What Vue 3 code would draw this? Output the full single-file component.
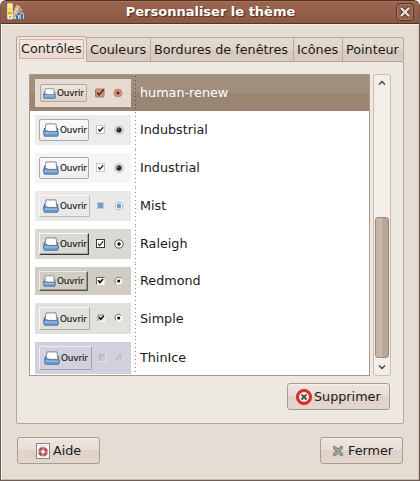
<script setup>
const tabs = [
  { label: 'Contrôles', cls: 't1 active' },
  { label: 'Couleurs', cls: 't2' },
  { label: 'Bordures de fenêtres', cls: 't3' },
  { label: 'Icônes', cls: 't4' },
  { label: 'Pointeur', cls: 't5' },
]
const themes = [
  { name: 'human-renew', cls: 'human', check: 'human', radio: 'human' },
  { name: 'Indubstrial', cls: 'indub', check: 'soft', radio: 'big' },
  { name: 'Industrial', cls: 'indus', check: 'soft', radio: 'big' },
  { name: 'Mist', cls: 'mist', check: 'mist', radio: 'mist' },
  { name: 'Raleigh', cls: 'raleigh', check: 'box', radio: 'box' },
  { name: 'Redmond', cls: 'redmond', check: 'inset', radio: 'inset' },
  { name: 'Simple', cls: 'simple', check: 'flat', radio: 'inset' },
  { name: 'ThinIce', cls: 'thin', check: 'thin', radio: 'thin' },
]
</script>

<template>
  <div class="window">
    <header class="titlebar">
      <svg class="app-icon" width="18" height="18" viewBox="0 0 18 18">
        <path d="M5 14 13 4l3 3-9 9z" fill="#a4a0a0" />
        <path d="M5 13 9.500 1.500l4 2L6 15z" fill="#d7b58d" />
        <path d="m8 5 3 2M7 8l3 2" stroke="#faf0d8" stroke-width="1" />
        <path d="m6 15 10-6 1 3v4H6z" fill="#c9cdd5" />
        <path d="M11 10h2v2h-2z" fill="#725b6d" />
        <path d="M9 12.500h2V16H9zM14 11h2v5h-2z" fill="#376fae" />
        <path d="M12 12h1.500v4H12z" fill="#86aed8" />
        <rect x=".5" y=".5" width="5" height="15.500" rx="1" fill="#f5f4e8" stroke="#d8d4cc" />
        <path d="M1 1h4v3H1z" fill="#f5ee9b" />
        <path d="M1 4.500h4v3H1z" fill="#f8df27" />
        <path d="M1 8.500h4v3H1z" fill="#d7bd12" />
        <circle cx="3" cy="13.800" r="1" fill="#8b8b86" />
      </svg>
      <h1>Personnaliser le thème</h1>
      <button class="close">
        <svg width="16" height="16" viewBox="0 0 16 16">
          <path d="m4 4 8 8M12 4l-8 8" stroke="#593329" stroke-width="4" />
          <path d="m4 4 8 8M12 4l-8 8" stroke="#eee2dc" stroke-width="2.400" />
        </svg>
      </button>
    </header>

    <main class="body">
      <nav class="tabs">
        <div v-for="t in tabs" :key="t.label" class="tab" :class="t.cls"><span>{{ t.label }}</span></div>
      </nav>

      <section class="panel">
        <div class="list-area">
          <ul class="list">
            <li v-for="t in themes" :key="t.name" class="row" :class="'r-' + t.cls">
              <div class="thumb" :class="t.cls">
                <div class="demo">
                  <svg class="folder" viewBox="0 0 16 14" preserveAspectRatio="none">
                    <path d="M3 .9h10l1 7.500H2z" fill="#fcfcfb" stroke="#85898d" />
                    <path d="M1.400 5v4M14.600 5v4" stroke="#55799f" stroke-width="1.200" />
                    <path d="M.7 7.800h3.600l1 1.200H15.300v2.200l-.7 2H1.400l-.7-2z" fill="#6f9fd0" stroke="#3f6da3" stroke-width=".9" />
                    <path d="M1.500 10h13" stroke="#a5c8e9" stroke-width="1.200" />
                  </svg>
                  <span>Ouvrir</span>
                </div>
                <svg class="check" width="12" height="12" viewBox="0 0 12 12">
                  <template v-if="t.check === 'human'">
                    <rect x="1.500" y="2" width="8.500" height="8" rx="1" fill="#d98f78" stroke="#a87563" />
                    <path d="m3 5.500 2 2.300 5-5.600" fill="none" stroke="#40302b" stroke-width="1.500" />
                  </template>
                  <template v-else-if="t.check === 'soft'">
                    <rect x="1.500" y="1.500" width="8" height="8" fill="#fff" stroke="#c6c6c6" />
                    <path d="m3.300 5.200 1.500 2 3.400-3.900" fill="none" stroke="#222" stroke-width="1.300" />
                  </template>
                  <template v-else-if="t.check === 'mist'">
                    <rect x="2.500" y="2.500" width="6" height="6" fill="#6c9fd5" stroke="#c5c9ce" />
                  </template>
                  <template v-else-if="t.check === 'box'">
                    <rect x="1.500" y="1.500" width="8" height="8" fill="#fff" stroke="#3a3a38" />
                    <path d="m3 5.500 1.600 2.200 3.700-4.500" fill="none" stroke="#222" stroke-width="1.100" />
                  </template>
                  <template v-else-if="t.check === 'inset'">
                    <rect x="1" y="2" width="8.500" height="8" fill="#fff" />
                    <path d="M1.500 9.500v-7h8" fill="none" stroke="#666159" />
                    <path d="m3.200 5.300 1.600 2.200L8 4" fill="none" stroke="#111" stroke-width="1.800" />
                  </template>
                  <template v-else-if="t.check === 'flat'">
                    <rect x="1.500" y="2.500" width="7" height="7" fill="#e9ebe6" />
                    <path d="M2 9V3h6" fill="none" stroke="#6e706c" stroke-width=".9" />
                    <path d="M8.500 3v6.500H2" fill="none" stroke="#fafaf7" />
                    <path d="m3 5 1.700 2.300L8 3.700" fill="none" stroke="#111" stroke-width="1.600" />
                  </template>
                  <template v-else>
                    <rect x="2" y="2.500" width="6.500" height="7" fill="#c8c8d4" />
                    <path d="M2.500 9V3H8" fill="none" stroke="#adadb9" />
                    <path d="M2 9.500h7v-7" fill="none" stroke="#e8e8f0" />
                  </template>
                </svg>
                <svg class="radio" width="12" height="12" viewBox="0 0 12 12">
                  <template v-if="t.radio === 'human'">
                    <circle cx="6" cy="6" r="4" fill="#d98f78" stroke="#c08a76" />
                    <circle cx="6" cy="6" r="1.500" fill="#40302b" />
                  </template>
                  <template v-else-if="t.radio === 'big'">
                    <circle cx="6" cy="6" r="4.100" fill="#fff" stroke="#a8a8a8" stroke-width=".9" />
                    <circle cx="6" cy="6" r="2.700" fill="#252525" />
                    <circle cx="5.200" cy="5" r=".8" fill="#999" />
                  </template>
                  <template v-else-if="t.radio === 'mist'">
                    <circle cx="6" cy="6" r="4" fill="#fff" stroke="#b1bac3" />
                    <circle cx="6" cy="6" r="2.400" fill="#6c9fd5" />
                  </template>
                  <template v-else-if="t.radio === 'box'">
                    <circle cx="6" cy="6" r="4.100" fill="#fff" stroke="#484845" stroke-width=".9" />
                    <circle cx="6" cy="6" r="1.800" fill="#111" />
                  </template>
                  <template v-else-if="t.radio === 'inset'">
                    <circle cx="5.700" cy="6" r="3.600" fill="#fff" />
                    <path d="M3 8.600A3.700 3.700 0 0 1 8.300 3.400" fill="none" stroke="#77736c" />
                    <circle cx="5.700" cy="6" r="1.600" fill="#111" />
                  </template>
                  <template v-else>
                    <circle cx="6" cy="6" r="3.700" fill="#c8c8d4" stroke="#e6e6ee" />
                    <path d="M3.400 8.600A3.700 3.700 0 0 1 8.600 3.400" fill="none" stroke="#b0b0bc" />
                  </template>
                </svg>
              </div>
              <span class="name">{{ t.name }}</span>
            </li>
          </ul>
          <div class="scrollbar">
            <svg class="arrow up" width="8" height="6" viewBox="0 0 8 6"><path d="m1 4.500 3-3 3 3" fill="none" stroke="#4a4542" stroke-width="1.500" /></svg>
            <div class="handle"></div>
            <svg class="arrow down" width="8" height="6" viewBox="0 0 8 6"><path d="m1 1.500 3 3 3-3" fill="none" stroke="#4a4542" stroke-width="1.500" /></svg>
          </div>
        </div>
        <div class="panel-actions">
          <button class="btn remove">
            <svg width="16" height="16" viewBox="0 0 16 16">
              <circle cx="8" cy="8" r="6.500" fill="#f4f1ef" stroke="#c71f22" stroke-width="3" />
              <circle cx="8" cy="8" r="6.600" fill="none" stroke="#e63335" stroke-width="1.500" />
              <path d="m5.500 5.500 5 5M10.500 5.500l-5 5" stroke="#555b57" stroke-width="2.300" />
            </svg>
            <span>Supprimer</span>
          </button>
        </div>
      </section>

      <footer class="footer">
        <button class="btn help">
          <svg width="14" height="16" viewBox="0 0 14 16">
            <rect x=".5" y=".5" width="13" height="15" fill="#f8f8f6" stroke="#858985" />
            <path d="M2.500 2.500h9" stroke="#dedfdc" />
            <circle cx="7" cy="8.700" r="3.500" fill="none" stroke="#a39f9d" stroke-width="2.800" />
            <circle cx="7" cy="8.700" r="3.500" fill="none" stroke="#d8343b" stroke-width="2.300" stroke-dasharray="3.300 2.198" stroke-dashoffset="-1.100" />
            <circle cx="7" cy="8.700" r="1.900" fill="#fff" stroke="#a55" stroke-width=".5" />
          </svg>
          <span>Aide</span>
        </button>
        <button class="btn shut">
          <svg width="12" height="12" viewBox="0 0 12 12">
            <path d="m2.500 2.500 7 7M9.500 2.500l-7 7" stroke="#7a7e79" stroke-width="3.400" stroke-linecap="round" />
            <path d="m2.500 2.500 7 7M9.500 2.500l-7 7" stroke="#a6aaa5" stroke-width="1.700" stroke-linecap="round" />
          </svg>
          <span>Fermer</span>
        </button>
      </footer>
    </main>
  </div>
</template>

<style>
body { margin: 0; background: #fff; overflow: hidden; }
</style>

<style scoped>
* { box-sizing: border-box; }
.window {
  width: 420px; height: 481px; display: flex; flex-direction: column;
  font-family: "DejaVu Sans", sans-serif; font-size: 12.75px; color: #1a1a1a;
  background: #e5dcd3; border: 1px solid #6f5d53; border-top: 0;
  border-radius: 6px 6px 0 0; overflow: hidden;
}
button { font: inherit; color: inherit; }
.titlebar {
  flex: none; height: 24px; margin: 0 -1px; padding: 0 5px 0 7px; display: flex; align-items: center;
  background: linear-gradient(#9b664f, #8b5844);
  border: 1px solid #50352b; border-top-color: #4d3026; border-radius: 6px 6px 0 0;
  box-shadow: inset 0 1px #ad735a;
}
.app-icon { flex: none; margin-left: -1px; }
h1 {
  flex: 1; margin: 0; text-align: center; white-space: nowrap;
  font-size: 13px; line-height: 22px; font-weight: bold; color: #fff;
  text-shadow: 1px 1px 1px #4e2c20;
}
.close {
  flex: none; width: 18px; height: 18px; padding: 0; display: grid; place-items: center;
  border: 1px solid #593529; border-radius: 4px; background: #936450;
  box-shadow: inset 0 0 0 1px #a87964;
}
.body {
  flex: 1; display: flex; flex-direction: column; padding: 11px 14px 0 14px;
  border: 1px solid #f3ede7; border-bottom-color: #c8b9ab; border-right-color: #d1c3b7;
}
.tabs { flex: none; height: 25px; display: flex; align-items: flex-end; line-height: 24px; }
.tab {
  flex: none; height: 24px; padding-left: 3px; white-space: nowrap;
  border: 1px solid #bca99a; border-bottom: 0; border-left: 0;
  background: linear-gradient(#e5dbd1, #e0d5ca 50%, #d7cabd 50%, #d8cbc0);
}
.tab.active {
  height: 26px; position: relative; margin-bottom: -1px; padding: 2px 0 0 2px;
  border-left: 1px solid #b4a192; border-radius: 3px 3px 0 0; background: #ede6df; line-height: 20px;
}
.tab.active span {
  display: block; width: 65px; height: 20px; padding-left: 1px; line-height: 18px;
  border: 1px solid #dfa994; background: linear-gradient(#f0e5de 55%, #eadbd2 55%);
}
.t1 { width: 71px; }
.t2 { width: 64px; }
.t3 { width: 143px; }
.t4 { width: 49px; }
.t5 { width: 61px; border-top-right-radius: 3px; }
.panel {
  flex: none; width: 388px; height: 363px; padding: 12px 12px 0;
  border: 1px solid #b8a596; border-radius: 0 0 2px 2px; background: #ede8e1;
}
.list-area { display: flex; gap: 3px; height: 302px; }
.list {
  width: 341px; margin: 0; padding: 0; list-style: none; overflow: hidden;
  border: 1px solid #a8998b; background: #fff;
}
.row { height: 38px; display: flex; align-items: flex-start; }
.row::before { content: ""; width: 5px; flex: none; }
.r-human {
  height: 36px; color: #fff;
  background: linear-gradient(#a38f7f, #a18d7c 51%, #998472 51%, #9b8675);
}
.r-redmond { height: 36px; }
.r-simple { height: 39px; }
.thumb {
  flex: none; width: 96px; height: 30px; margin-top: 4px; padding: 4px 0 0 4px;
  display: flex; align-items: flex-start; color: #222;
}
.name {
  align-self: stretch; margin-left: 4px; padding-left: 5px; line-height: 37px; white-space: nowrap;
  background: repeating-linear-gradient(transparent 0 1px, #8d8882 1px 2px, transparent 2px 4px) 0 0 / 1px 100% no-repeat;
}
.r-human .name {
  line-height: 36px;
  background-image: repeating-linear-gradient(transparent 0 1px, #5d5046 1px 2px, transparent 2px 4px);
}
.r-redmond .name { line-height: 36px; }
.r-simple .name, .r-thin .name { line-height: 39px; }
.demo {
  flex: none; width: 50px; height: 22px; padding-left: 3px; display: flex; align-items: center;
  border: 1px solid #a9a9a9; border-radius: 2px; background: linear-gradient(#fafafa, #eeeeee);
}
.demo span {
  font-size: 8.800px; line-height: 12px; letter-spacing: -.1px; margin-left: 1px;
  -webkit-text-stroke: .2px #222;
}
.folder { flex: none; width: 16px; height: 14px; }
.check { flex: none; margin-top: 5px; margin-left: 6px; }
.radio { flex: none; margin-top: 5px; margin-left: 6px; }
.human { height: 28px; padding: 5px 0 0 5px; background: #e5dad0; }
.human .demo { width: 47px; height: 18px; padding-left: 2px; border-color: #b4a79c; background: linear-gradient(#eee5dd, #ded1c6); }
.human .folder { width: 13px; height: 11px; }
.human .check, .human .radio { margin-top: 3px; }
.human .check { margin-left: 7px; }
.indub { background: #ececec; }
.indus { background: #f5f5f5; }
.mist { background: #e9e9e9; }
.mist .demo { width: 51px; border-color: #f8f8f8 #bcbcbc #bcbcbc #f8f8f8; border-radius: 0; background: #e9e9e9; }
.mist .check { margin-left: 5px; }
.raleigh { background: #dad9d3; }
.raleigh .demo { border-color: #f8f8f4 #353532 #353532 #f8f8f4; border-radius: 0; background: #d9d8d2; box-shadow: inset -1px -1px #aaa9a3; }
.redmond { height: 28px; background: #d2cdc4; }
.redmond .demo { width: 49px; height: 20px; border-color: #eeebe4 #5d5953 #5d5953 #eeebe4; border-radius: 0; background: #d2cdc4; box-shadow: inset -1px -1px #99948b; }
.redmond .folder { width: 13px; height: 12px; }
.redmond .check, .redmond .radio { margin-top: 4px; }
.redmond .check { margin-left: 7px; }
.simple { height: 31px; background: #e0e1dc; }
.simple .demo { width: 51px; height: 23px; border-color: #f8f8f4 #aaaca6 #aaaca6 #f8f8f4; border-radius: 0; background: #e0e1dc; }
.simple .radio { margin-left: 5px; }
.thin { height: 32px; background: #d1d1dd; }
.thin .demo { width: 53px; height: 24px; padding-left: 4px; border-color: #ededf5 #a0a0ac #a0a0ac #ededf5; background: #d2d2de; }
.thin .check { margin-left: 5px; }
.thin .radio { margin-left: 5px; }
.thin .check, .thin .radio { margin-top: 6px; }
.scrollbar {
  width: 18px; height: 302px; display: flex; flex-direction: column; align-items: center;
  border: 1px solid #cdbcb0; border-radius: 3px; background: #f3eeea;
}
.up { margin-top: 5px; }
.handle {
  width: 14px; height: 141px; margin-top: 131px; border: 1px solid #9d887a; border-radius: 3px;
  background: linear-gradient(90deg, #c3b1a2, #cdbdaf 50%, #bda999 50%, #b9a595);
}
.down { margin-top: 6px; }
.panel-actions { display: flex; justify-content: flex-end; padding: 7px 1px 0 0; }
.btn {
  height: 27px; padding: 0; display: flex; align-items: center; white-space: nowrap;
  border: 1px solid #ab9b8e; border-radius: 3px;
  background: linear-gradient(#eee5df, #e8ded6 48%, #dfd2c8 50%, #e3d7ce);
  box-shadow: inset 0 1px #f5eee9;
}
.btn svg { flex: none; }
.remove { width: 103px; padding-left: 8px; gap: 2px; }
.footer { display: flex; justify-content: space-between; padding: 13px 1px 0; width: 388px; }
.help { width: 83px; padding-left: 18px; gap: 3px; }
.shut { width: 83px; padding-left: 11px; gap: 4px; }
</style>
